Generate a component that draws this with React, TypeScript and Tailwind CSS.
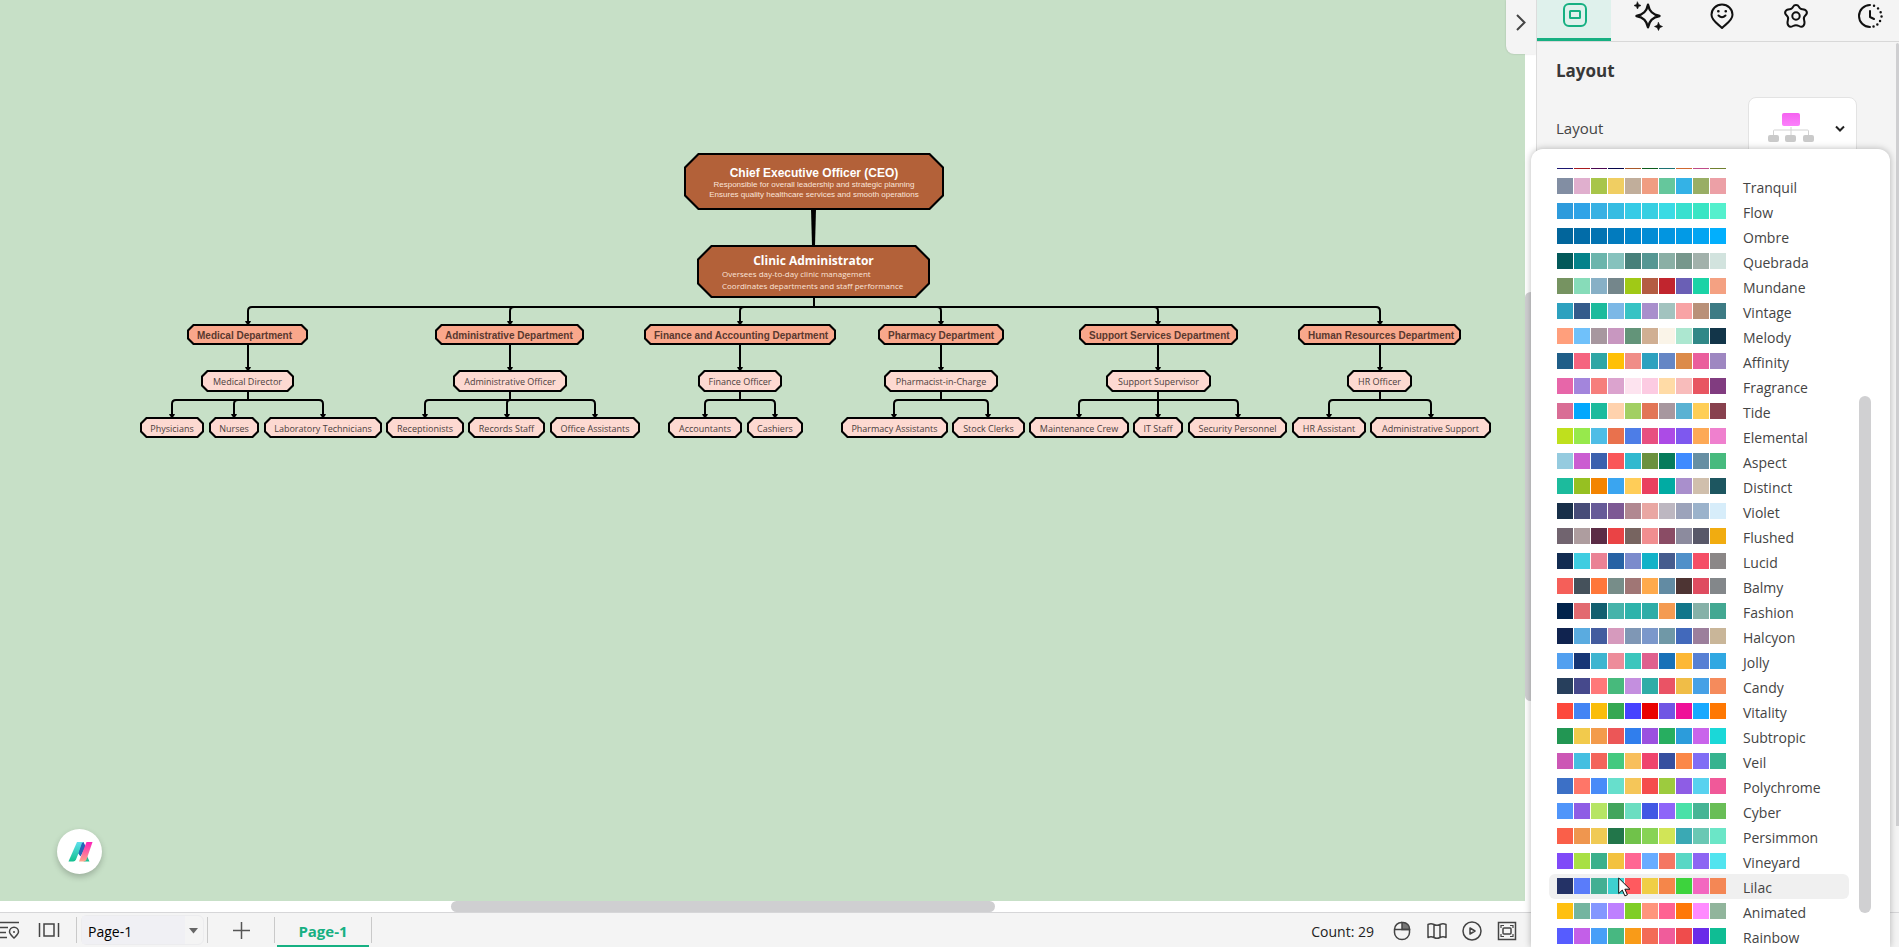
import type { ReactNode } from "react";

type Palette = { name: string; colors: string[] };

const palettes: Palette[] = [
  { name: "Nocturne", colors: ["#1b1670", "#a81a20", "#4a0650", "#06044a", "#a8582a", "#0c5c1c", "#1c7272", "#cf6730", "#c04c88", "#70802f"] },
  { name: "Tranquil", colors: ["#828ea3", "#e0afce", "#a8c54a", "#f0ce62", "#c1ae9b", "#f09d82", "#65c79c", "#34b2e6", "#99ae65", "#eca0a6"] },
  { name: "Flow", colors: ["#2e9bdc", "#2fa3e7", "#38b1e3", "#35bce2", "#35cbe6", "#37cfe2", "#3adbe4", "#38e0cf", "#39e5c4", "#54f0cd"] },
  { name: "Ombre", colors: ["#02659b", "#026ca8", "#0273b2", "#027bbe", "#0284ca", "#028cd5", "#0295e0", "#029ae6", "#02a5f2", "#02affd"] },
  { name: "Quebrada", colors: ["#03595a", "#04828a", "#6bb5ac", "#86c2bd", "#47807a", "#559793", "#8aafa5", "#77978c", "#a2b1ab", "#d2e3de"] },
  { name: "Mundane", colors: ["#769361", "#87dcb9", "#87b0c6", "#74868b", "#a0c916", "#b45c42", "#c1252e", "#6a5fb5", "#1bd3a6", "#f4a182"] },
  { name: "Vintage", colors: ["#2da1bf", "#345b8b", "#1cbb9d", "#7cb8e6", "#37c3c4", "#a98fcc", "#a2c3bf", "#f8a3a5", "#b99179", "#3d7b84"] },
  { name: "Melody", colors: ["#ff9f7c", "#70c1fa", "#a7979f", "#c897c0", "#639479", "#d0af93", "#faf4e8", "#ace7d0", "#308887", "#123549"] },
  { name: "Affinity", colors: ["#1f5e88", "#f5647f", "#2ea6a5", "#ffc005", "#f08d87", "#2da1bf", "#6586c5", "#dc8b4a", "#ea5e9c", "#9e87c1"] },
  { name: "Fragrance", colors: ["#e766a9", "#a385dc", "#f67e7c", "#dba3ce", "#fde3ef", "#fccbe2", "#ffdba6", "#f8bcbb", "#e85561", "#813c80"] },
  { name: "Tide", colors: ["#d96d95", "#02a8fd", "#1cbb9d", "#ffd2ad", "#a2cf63", "#e27556", "#a7979f", "#5ab2d3", "#ffce56", "#88414e"] },
  { name: "Elemental", colors: ["#bfe01d", "#97e94c", "#4ebde6", "#e9714d", "#4d7de7", "#e84f80", "#ac4be6", "#7e58ef", "#fda956", "#ef80ce"] },
  { name: "Aspect", colors: ["#95cbdf", "#cb5dd1", "#3c61ae", "#fa5759", "#31b9cf", "#6b913e", "#067b5b", "#3f8bff", "#668fa3", "#47ba7e"] },
  { name: "Distinct", colors: ["#1cbb9d", "#96c022", "#f38401", "#3aa5f0", "#ffcd58", "#ea405f", "#01aba3", "#a98fcc", "#d0bfac", "#1d5660"] },
  { name: "Violet", colors: ["#182f49", "#474c78", "#665a98", "#7d5994", "#b18891", "#e9a7a3", "#bdb7c1", "#9ca3bb", "#9bb2cb", "#d7edfa"] },
  { name: "Flushed", colors: ["#71646f", "#ae9d9f", "#5b2c46", "#ea4345", "#776460", "#f18e90", "#8a4c65", "#8c8b9e", "#585869", "#f1ac10"] },
  { name: "Lucid", colors: ["#122c51", "#3fcde1", "#ea8295", "#2762a4", "#7b8bcc", "#12b2c8", "#455c8e", "#5090c9", "#f54e66", "#8b8787"] },
  { name: "Balmy", colors: ["#f55f59", "#45515b", "#ff773a", "#778d89", "#a07675", "#ffaa4c", "#628ba3", "#4d3433", "#df4c60", "#83878a"] },
  { name: "Fashion", colors: ["#01234b", "#e26a70", "#125f6f", "#46b3aa", "#2eb3ab", "#2fada7", "#f49b52", "#11768a", "#86b1a8", "#43a892"] },
  { name: "Halcyon", colors: ["#10234f", "#5aabe0", "#435c9f", "#d69abd", "#7f97b5", "#7b98cb", "#7098a7", "#4269bb", "#9c7f9c", "#c9b699"] },
  { name: "Jolly", colors: ["#52a0f0", "#163676", "#3fb5d0", "#ed8c9a", "#3bc6bd", "#df608e", "#1871b8", "#fdb835", "#5780d4", "#30a8e2"] },
  { name: "Candy", colors: ["#273f5c", "#46498c", "#ff7879", "#47ba7c", "#c48fdf", "#2fada7", "#ea5365", "#f0bd47", "#46a1e6", "#f58b5c"] },
  { name: "Vitality", colors: ["#fd483b", "#4384f4", "#fabd0a", "#35a853", "#4742ff", "#ea0202", "#7055e4", "#ef1098", "#18a9ff", "#ff7802"] },
  { name: "Subtropic", colors: ["#229653", "#f2ca4c", "#f39b4b", "#ec5657", "#307eed", "#9b51e0", "#27ae60", "#2c9cdb", "#c964eb", "#1ad8d8"] },
  { name: "Veil", colors: ["#cc57b5", "#44bfe1", "#f3645b", "#44c97f", "#f8bf5c", "#ef446d", "#364f9f", "#fb8848", "#806df5", "#36b38f"] },
  { name: "Polychrome", colors: ["#3c70c6", "#ff7668", "#488bf8", "#67dfcc", "#f5c659", "#f54d4d", "#9dcb3e", "#8e5de5", "#58d2ef", "#f05999"] },
  { name: "Cyber", colors: ["#5095fa", "#8e5de5", "#b6e564", "#42a55d", "#6bdec1", "#4258e4", "#8e65f9", "#4ae1a8", "#46b595", "#69be57"] },
  { name: "Persimmon", colors: ["#fa5f49", "#ef964f", "#f0ca54", "#22764a", "#70c24a", "#87d355", "#d1e557", "#3aa9b4", "#6ac8b4", "#6be6c7"] },
  { name: "Vineyard", colors: ["#804af8", "#a8e044", "#3bb08c", "#f3c23f", "#ff6693", "#68acff", "#f47763", "#59d7c5", "#8d65f3", "#52e4ef"] },
  { name: "Lilac", colors: ["#243266", "#5a7cfa", "#43af93", "#3ed0cf", "#ff5a5f", "#f0ce46", "#f5864a", "#3dd33d", "#f367c0", "#f48755"] },
  { name: "Animated", colors: ["#ffc010", "#74b5a0", "#8497ff", "#be80ff", "#7fce26", "#ff957c", "#ff6292", "#ff7808", "#ff8aff", "#91b59c"] },
  { name: "Rainbow", colors: ["#565cff", "#c35fe8", "#479ff8", "#47b881", "#f99b18", "#f36b56", "#f05c9b", "#ef4c4c", "#6a2be9", "#0fbd94"] },
];

type ChartNode = { label: string; x: number; w: number };

const departments: ChartNode[] = [
  { label: "Medical Department", x: 187, w: 121 },
  { label: "Administrative Department", x: 435, w: 149 },
  { label: "Finance and Accounting Department", x: 644, w: 192 },
  { label: "Pharmacy Department", x: 878, w: 126 },
  { label: "Support Services Department", x: 1079, w: 159 },
  { label: "Human Resources Department", x: 1298, w: 163 },
];

const managers: ChartNode[] = [
  { label: "Medical Director", x: 201, w: 93 },
  { label: "Administrative Officer", x: 453, w: 114 },
  { label: "Finance Officer", x: 698, w: 84 },
  { label: "Pharmacist-in-Charge", x: 884, w: 114 },
  { label: "Support Supervisor", x: 1106, w: 105 },
  { label: "HR Officer", x: 1347, w: 65 },
];

const staff: ChartNode[] = [
  { label: "Physicians", x: 140, w: 64 },
  { label: "Nurses", x: 209, w: 50 },
  { label: "Laboratory Technicians", x: 264, w: 118 },
  { label: "Receptionists", x: 386, w: 78 },
  { label: "Records Staff", x: 468, w: 77 },
  { label: "Office Assistants", x: 550, w: 90 },
  { label: "Accountants", x: 668, w: 74 },
  { label: "Cashiers", x: 747, w: 56 },
  { label: "Pharmacy Assistants", x: 841, w: 107 },
  { label: "Stock Clerks", x: 952, w: 73 },
  { label: "Maintenance Crew", x: 1029, w: 100 },
  { label: "IT Staff", x: 1133, w: 50 },
  { label: "Security Personnel", x: 1188, w: 99 },
  { label: "HR Assistant", x: 1292, w: 74 },
  { label: "Administrative Support", x: 1370, w: 121 },
];

const branches = [
  { x: 248, children: [172, 234, 323] },
  { x: 510, children: [425, 507, 595] },
  { x: 740, children: [705, 775] },
  { x: 941, children: [894, 988] },
  { x: 1158, children: [1079, 1158, 1238] },
  { x: 1380, children: [1329, 1431] },
];

const smallCut =
  "[clip-path:polygon(6px_0,calc(100%-6px)_0,100%_6px,100%_calc(100%-6px),calc(100%-6px)_100%,6px_100%,0_calc(100%-6px),0_6px)]";
const smallInnerCut =
  "[clip-path:polygon(5px_0,calc(100%-5px)_0,100%_5px,100%_calc(100%-5px),calc(100%-5px)_100%,5px_100%,0_calc(100%-5px),0_5px)]";
const largeCut =
  "[clip-path:polygon(14px_0,calc(100%-14px)_0,100%_14px,100%_calc(100%-14px),calc(100%-14px)_100%,14px_100%,0_calc(100%-14px),0_14px)]";
const largeInnerCut =
  "[clip-path:polygon(13px_0,calc(100%-13px)_0,100%_13px,100%_calc(100%-13px),calc(100%-13px)_100%,13px_100%,0_calc(100%-13px),0_13px)]";

function SmallNode({ node, tone, top }: { node: ChartNode; tone: string; top: string }) {
  return (
    <div className={`absolute flex bg-black p-0.5 ${smallCut} ${top}`} style={{ left: node.x, width: node.w }}>
      <div className={`flex flex-1 items-center whitespace-nowrap pt-0.5 ${smallInnerCut} ${tone}`}>
        {node.label}
      </div>
    </div>
  );
}

/* Path from a bus line down to a child, with a rounded corner facing the trunk. */
function drop(trunk: number, x: number, busY: number, endY: number) {
  if (Math.abs(trunk - x) < 2) return `M${x} ${busY}V${endY}`;
  const d = x < trunk ? 1 : -1;
  const r = Math.min(4, Math.abs(trunk - x));
  return `M${trunk} ${busY}H${x + d * r}Q${x} ${busY} ${x} ${busY + r}V${endY}`;
}

function Arrow({ x, y }: { x: number; y: number }) {
  return <path d={`M${x - 3} ${y - 4}h6l-1 2l-2 2l-2 -2z`} fill="#000" stroke="none" />;
}

function Connectors() {
  return (
    <svg className="absolute left-0 top-0" width="1525" height="460" fill="none" stroke="#000" strokeWidth="2" aria-hidden="true">
      <path d="M811 209h5l-1 37h-3z" fill="#000" stroke="none" />
      <path d="M814 297V307" />
      {branches.map((b) => (
        <g key={b.x}>
          <path d={drop(814, b.x, 307, 324)} />
          <path d={`M${b.x} 344V371M${b.x} 391V400`} />
          <Arrow x={b.x} y={325} />
          <Arrow x={b.x} y={371} />
          {b.children.map((c) => (
            <g key={c}>
              <path d={drop(b.x, c, 400, 418)} />
              <Arrow x={c} y={418} />
            </g>
          ))}
        </g>
      ))}
    </svg>
  );
}

function OrgChart() {
  return (
    <div className="absolute left-0 top-0">
      <Connectors />
      <div className={`absolute left-[684px] top-[153px] flex h-[57px] w-[260px] bg-black p-0.5 font-['Liberation_Sans',sans-serif] ${largeCut}`}>
        <div className={`flex flex-1 flex-col items-center justify-center whitespace-nowrap bg-[#b36139] pt-0.5 text-[#fbe3d8] ${largeInnerCut}`}>
          <div className="text-[12px] font-bold leading-[14px] text-white">Chief Executive Officer (CEO)</div>
          <div className="text-[8px] leading-[10px]">Responsible for overall leadership and strategic planning</div>
          <div className="text-[8px] leading-[10px]">Ensures quality healthcare services and smooth operations</div>
        </div>
      </div>
      <div className={`absolute left-[697px] top-[245px] flex h-[53px] w-[233px] bg-black p-0.5 ${largeCut}`}>
        <div className={`flex flex-1 flex-col justify-center whitespace-nowrap bg-[#b36139] px-[23px] pt-0.5 text-[#fbe3d8] ${largeInnerCut}`}>
          <div className="text-center text-[12px] font-bold leading-[14px] text-white">Clinic Administrator</div>
          <div className="text-[8px] leading-[12px]">Oversees day-to-day clinic management</div>
          <div className="text-[8px] leading-[12px]">Coordinates departments and staff performance</div>
        </div>
      </div>
      {departments.map((n) => (
        <SmallNode key={n.label} node={n} top="top-[324px] h-[21px]" tone="bg-[#f9a78b] pl-2 font-['Liberation_Sans',sans-serif] text-[10px] font-bold text-[#5a382e]" />
      ))}
      {managers.map((n) => (
        <SmallNode key={n.label} node={n} top="top-[370px] h-[22px]" tone="justify-center bg-[#fdd9d1] text-[9px] text-[#4b403d]" />
      ))}
      {staff.map((n) => (
        <SmallNode key={n.label} node={n} top="top-[417px] h-[21px]" tone="justify-center bg-[#fdd9d1] text-[9px] text-[#4b403d]" />
      ))}
    </div>
  );
}

function AssistantButton() {
  return (
    <button aria-label="Assistant" className="absolute bottom-[27px] left-[57px] flex size-[45px] items-center justify-center rounded-full bg-white shadow-[0_3px_6px_rgba(0,0,0,0.22)]">
      <svg width="26" height="20" viewBox="0 0 26 20" aria-hidden="true">
        <defs>
          <linearGradient id="teal" x1="0" y1="0" x2="0" y2="1">
            <stop offset="0" stopColor="#5fe0ee" />
            <stop offset="1" stopColor="#12c08f" />
          </linearGradient>
          <linearGradient id="pink" x1="0" y1="0" x2="0" y2="1">
            <stop offset="0" stopColor="#fb22b8" />
            <stop offset="1" stopColor="#ffa58a" />
          </linearGradient>
        </defs>
        <path d="M20 14l2.500 5.500h-6z" fill="#1fbf93" />
        <path d="M13 0h3.500l2 4.500-5 10-3-4z" fill="#2466b8" />
        <path d="M10 0H16L9 17.500q-.8 2-2.800 2H1.500z" fill="url(#teal)" />
        <path d="M15 1l1.500 0 2 4-5 9-1.500-4z" fill="#2466b8" />
        <path d="M19.500 0H25.500L19.500 17.500q-.8 2-2.800 2H12z" fill="url(#pink)" />
      </svg>
    </button>
  );
}

function TabButton({ label, active, children }: { label: string; active?: boolean; children: ReactNode }) {
  return (
    <button
      role="tab"
      aria-label={label}
      aria-selected={!!active}
      className={`flex w-[74px] shrink-0 justify-center border-b-[3px] ${
        active ? "border-[#16b082] bg-[#dff1ec] text-[#16b082]" : "border-transparent text-[#111]"
      }`}
    >
      <svg width="30" height="32" viewBox="0 0 30 32" fill="none" stroke="currentColor" strokeWidth="2" strokeLinecap="round" strokeLinejoin="round" aria-hidden="true">
        {children}
      </svg>
    </button>
  );
}

function PanelTabs() {
  return (
    <div role="tablist" className="flex h-[41px] overflow-hidden">
      <TabButton label="Layout" active>
        <rect x="5" y="4" width="22" height="22" rx="5" />
        <rect x="11" y="11" width="10" height="7" rx="0.5" />
      </TabButton>
      <TabButton label="Smart">
        <path d="M15 4.800C16.400 11.600 19.600 14.600 26.500 16C19.600 17.400 16.400 20.400 15 27.200C13.600 20.400 10.400 17.400 3.500 16C10.400 14.600 13.600 11.600 15 4.800z" strokeWidth="2.400" />
        <path d="M4.500 2l1.100 2.400L8 5.500l-2.400 1.100L4.500 9 3.400 6.600 1 5.500l2.400-1.100zM25.500 22.500l1.200 2.800 2.800 1.200-2.800 1.200-1.200 2.800-1.200-2.800-2.800-1.200 2.800-1.200z" fill="currentColor" strokeWidth="0.600" />
      </TabButton>
      <TabButton label="Stickers">
        <path d="M15 28C12 24.500 4.500 21 4.500 14.800a10.500 10.200 0 0 1 21 0C25.500 21 18 24.500 15 28z" />
        <path d="M11.500 15.500q3.500 3.500 7 0" strokeWidth="2" />
        <path d="M11.300 11.300h.1M18.700 11.300h.1" strokeWidth="2.600" />
      </TabButton>
      <TabButton label="Theme">
        <path d="M12.200 6.600C13.200 4.300 16.800 4.300 17.800 6.600C18.500 8.200 19.300 9.100 21.400 9.200C25.800 9.400 27.300 12.800 24.300 15.500C22.700 16.900 22.400 17.900 23.100 20C24.500 24.500 22 28.300 18 26C15.900 24.800 14.100 24.800 12 26C8 28.300 5.500 24.500 6.900 20C7.600 17.900 7.300 16.900 5.700 15.500C2.700 12.800 4.200 9.400 8.600 9.200C10.700 9.100 11.500 8.200 12.200 6.600z" />
        <circle cx="15" cy="16" r="3.700" />
      </TabButton>
      <TabButton label="History">
        <path d="M15 5A11 11 0 0 0 15 27M15 11v6l4 2" />
        <path d="M19 5.700h.1M23 8.400h.1M25.600 12.200h.1M26.500 16.500h.1M25 21h.1M22.300 24.500h.1M18.500 26.500h.1" strokeWidth="2.400" />
      </TabButton>
    </div>
  );
}

function LayoutPicker() {
  return (
    <button id="layout-picker" aria-label="Layout style" className="flex h-[63px] w-[109px] items-center justify-between rounded-lg border border-[#e3e3e3] bg-white pl-[18px] pr-2.5">
      <svg width="48" height="32" viewBox="0 0 48 32" fill="none" aria-hidden="true">
        <defs>
          <linearGradient id="root-box" x1="0" y1="0" x2="0" y2="1">
            <stop offset="0" stopColor="#f562f0" />
            <stop offset="1" stopColor="#fb80fb" />
          </linearGradient>
        </defs>
        <path d="M24 14v9M6.500 23v-5q0-1 1-1h33q1 0 1 1v5" stroke="#d2d2d2" />
        <rect x="15" y="0" width="18" height="13" rx="2" fill="url(#root-box)" />
        <rect x="1" y="22" width="11" height="7" rx="2" fill="#cacaca" />
        <rect x="18" y="22" width="11" height="7" rx="2" fill="#cacaca" />
        <rect x="36" y="22" width="11" height="7" rx="2" fill="#cacaca" />
      </svg>
      <svg width="12" height="8" viewBox="0 0 12 8" fill="none" stroke="#222" strokeWidth="2" aria-hidden="true">
        <path d="M2 1.500L6 5.500L10 1.500" />
      </svg>
    </button>
  );
}

function Cursor() {
  return (
    <svg className="absolute left-[69px] top-[3px]" width="13" height="20" viewBox="0 0 13 20" aria-hidden="true">
      <path d="M.7 1v15.500l3.600-3.400 2.600 5.800 2.500-1.100-2.500-5.600h5z" fill="#fff" stroke="#111" />
    </svg>
  );
}

function PaletteMenu() {
  return (
    <div className="absolute bottom-0 right-[9px] top-[149px] flex w-[359px] rounded-t-xl bg-white pl-[18px] pr-[19px] pt-[19px] shadow-[0_0_7px_rgba(0,0,0,0.28)]">
      <div className="flex flex-1 flex-col justify-start overflow-hidden">
        <ul className="-mt-[19px]">
          {palettes.map((p, i) => (
            <li key={p.name} className="relative">
              <button className={`flex h-[25px] w-[300px] items-start rounded-md pl-2 pt-1 text-left ${p.name === "Lilac" ? "bg-[#f0f0f0]" : ""}`}>
                <span className="flex gap-px">
                  {p.colors.map((c, k) => (
                    <span key={k} className="size-4" style={{ backgroundColor: c }} />
                  ))}
                </span>
                {i > 0 && <span className="pl-[17px] text-[14px] leading-[19px] text-[#444]">{p.name}</span>}
              </button>
              {p.name === "Lilac" && <Cursor />}
            </li>
          ))}
        </ul>
      </div>
      <div className="flex w-3 flex-col pb-[34px] pt-[228px]">
        <div className="flex-1 rounded-full bg-[#d0d0d2]" />
      </div>
    </div>
  );
}

function SidePanel() {
  return (
    <aside className="relative w-[363px] shrink-0 border-l border-[#dcdcdc] bg-[#f4f4f4]">
      <PanelTabs />
      <div className="flex h-[871px] border-t border-[#d8d8d8]">
        <section className="flex-1 pl-[19px] pr-[39px] pt-[17px]">
          <h2 className="text-[17px] font-bold leading-6 text-[#383838]">Layout</h2>
          <div className="flex items-center justify-between pt-[14px]">
            <label htmlFor="layout-picker" className="text-[15px] text-[#444]">Layout</label>
            <LayoutPicker />
          </div>
        </section>
        <div className="w-[3px] pb-[86px] pt-px">
          <div className="h-full rounded-t-full bg-[#cfcfd1]" />
        </div>
      </div>
    </aside>
  );
}

function Divider() {
  return <span className="h-[26px] w-px bg-[#c9c9c9]" />;
}

function StatusBar() {
  return (
    <footer className="flex h-[35px] shrink-0 items-center border-t border-[#d6d6d8] bg-[#f4f4f4] text-[14px] text-[#222]">
      <button aria-label="Outline" className="w-5">
        <svg width="20" height="20" viewBox="0 0 20 20" fill="none" stroke="#444" strokeWidth="1.500" aria-hidden="true">
          <path d="M0 2.500H19M0 7.500H8M0 12.500H6M0 17.500H7" />
          <path d="M14 18c-2.500-2.400-4.500-4-4.500-6.200a4.500 4.500 0 0 1 9 0C18.500 14 16.500 15.600 14 18z" />
          <circle cx="14" cy="12" r="1" fill="#444" stroke="none" />
        </svg>
      </button>
      <button aria-label="Slides" className="ml-[18px] mr-4">
        <svg width="22" height="16" viewBox="0 0 22 16" fill="none" stroke="#444" strokeWidth="1.500" aria-hidden="true">
          <path d="M1.500 1v14M20.500 1v14M6 2h10v12H6z" />
        </svg>
      </button>
      <Divider />
      <div className="relative ml-1 h-[30px] w-[123px] rounded-md border border-[#ececee]">
        <select aria-label="Page" defaultValue="Page-1" className="h-full w-[103px] appearance-none bg-[#f0f0f4] pl-[6px] pt-0.5 text-[14px] text-black">
          <option>Page-1</option>
        </select>
        <svg className="pointer-events-none absolute right-[5px] top-[12px]" width="9" height="6" viewBox="0 0 9 6" aria-hidden="true">
          <path d="M0 0h9L4.500 5.500z" fill="#666" />
        </svg>
      </div>
      <span className="ml-[3px] flex"><Divider /></span>
      <button aria-label="Add page" className="flex w-[66px] justify-center">
        <svg width="17" height="17" viewBox="0 0 17 17" stroke="#555" strokeWidth="1.500" aria-hidden="true">
          <path d="M8.500 0v17M0 8.500h17" />
        </svg>
      </button>
      <Divider />
      <button className="mx-[2px] h-full w-[92px] border-b-2 border-[#16b082] pt-1 text-[15px] font-bold text-[#16b082]">Page-1</button>
      <Divider />
      <span className="ml-auto pr-[18px] pt-0.5">Count: 29</span>
      <div className="mr-[382px] flex items-center gap-[15px] pt-0.5 text-[#444]">
        <button aria-label="Mouse mode">
          <svg width="20" height="20" viewBox="0 0 20 20" fill="none" stroke="currentColor" strokeWidth="1.500" aria-hidden="true">
            <path d="M10 1.500h1a6.500 6 0 0 1 6.500 6.500v.5H10z" fill="#777" />
            <path d="M2.500 8.500h15v3a7.500 7 0 0 1-15 0zM2.500 8.500a7 7 0 0 1 7.500-7" />
          </svg>
        </button>
        <button aria-label="Map">
          <svg width="20" height="20" viewBox="0 0 20 20" fill="none" stroke="currentColor" strokeWidth="1.500" strokeLinejoin="round" aria-hidden="true">
            <path d="M1 3.500Q4 2 7 3.500T13 3.500T19 3.500V16.500Q16 15 13 16.500T7 16.500T1 16.500zM7 3.500v13M13 3.500v13" />
          </svg>
        </button>
        <button aria-label="Present">
          <svg width="20" height="20" viewBox="0 0 20 20" fill="none" stroke="currentColor" strokeWidth="1.500" strokeLinejoin="round" aria-hidden="true">
            <circle cx="10" cy="10" r="9" />
            <path d="M8 7l5 3-5 3z" />
          </svg>
        </button>
        <button aria-label="Fit page">
          <svg width="20" height="20" viewBox="0 0 20 20" fill="none" stroke="currentColor" strokeWidth="1.500" aria-hidden="true">
            <rect x="1.500" y="1.500" width="17" height="17" />
            <rect x="6" y="7" width="8" height="6" rx="1" />
            <path d="M4 7V4.500h3M13 4.500h3V7M16 13v2.500h-3M7 15.500H4V13" strokeWidth="1.200" />
          </svg>
        </button>
      </div>
    </footer>
  );
}

export default function App() {
  return (
    <div className="relative flex h-screen w-full flex-col overflow-hidden bg-white font-['Open_Sans','Noto_Sans',sans-serif]">
      <div className="flex min-h-0 flex-1">
        <main className="relative flex min-w-0 flex-1 flex-col">
          <div className="flex min-h-0 flex-1">
            <div className="relative flex-1 overflow-hidden bg-[#c7e0c7]">
              <OrgChart />
              <AssistantButton />
            </div>
            <div className="w-[11px] pb-[200px] pt-[292px]">
              <div className="h-full rounded-full bg-[#cfcfd1]" />
            </div>
          </div>
          <div className="h-[11px] pl-[451px]">
            <div className="h-full w-[544px] rounded-full bg-[#cfcfd1]" />
          </div>
          <button aria-label="Collapse panel" className="absolute right-0 top-0 flex h-[54px] w-[30px] items-start justify-center rounded-bl-lg bg-[#f4f4f4] pt-[14px] shadow-[0_0_2px_rgba(0,0,0,0.2)]">
            <svg width="10" height="17" viewBox="0 0 10 17" fill="none" stroke="#444" strokeWidth="2" aria-hidden="true">
              <path d="M1 1l7.500 7.500L1 16" />
            </svg>
          </button>
        </main>
        <SidePanel />
      </div>
      <StatusBar />
      <PaletteMenu />
    </div>
  );
}
